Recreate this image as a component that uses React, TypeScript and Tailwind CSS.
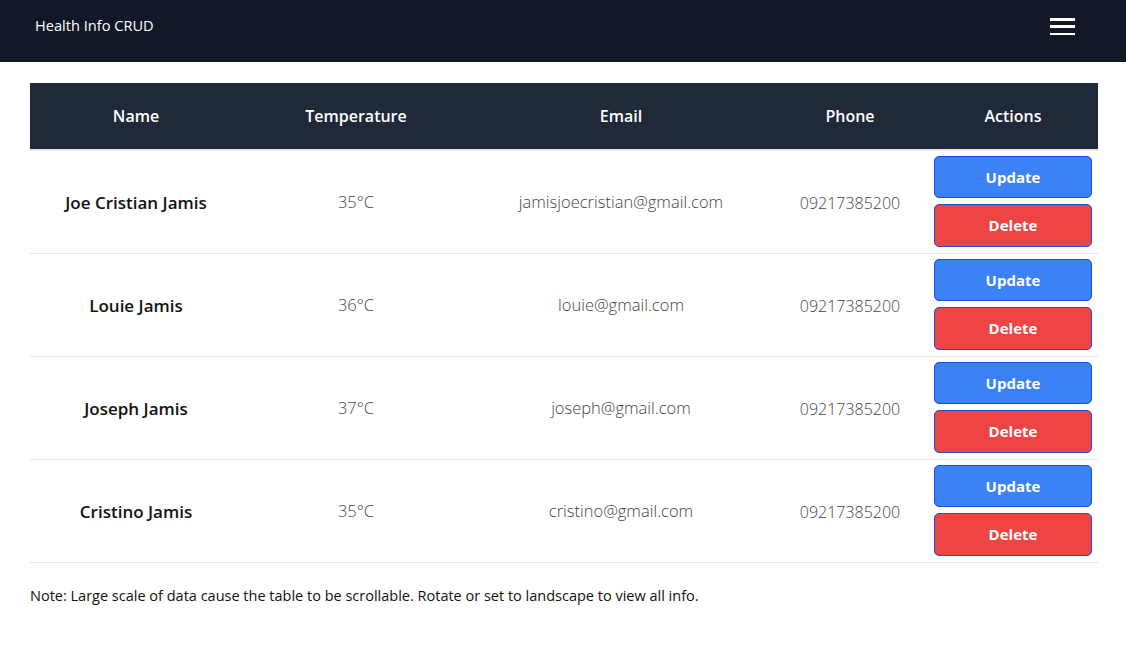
import React from "react";

const rows = [
  { name: "Joe Cristian Jamis", temp: "35°C", email: "jamisjoecristian@gmail.com", phone: "09217385200" },
  { name: "Louie Jamis", temp: "36°C", email: "louie@gmail.com", phone: "09217385200" },
  { name: "Joseph Jamis", temp: "37°C", email: "joseph@gmail.com", phone: "09217385200" },
  { name: "Cristino Jamis", temp: "35°C", email: "cristino@gmail.com", phone: "09217385200" },
];

export default function App() {
  return (
    <div className="min-h-screen bg-white font-['Open_Sans',sans-serif] text-[#111]">
      <nav className="flex h-[62px] items-center justify-between bg-[#111827] pb-[10px] pl-[35px] pr-[51px]">
        <span className="text-[14.6px] text-white">Health Info CRUD</span>
        <svg width="25" height="17" viewBox="0 0 25 17" className="block">
          <rect x="0" y="0" width="25" height="3" fill="white" />
          <rect x="0" y="7" width="25" height="3" fill="white" />
          <rect x="0" y="15" width="25" height="3" fill="white" />
        </svg>
      </nav>
      <div className="pl-[30px] pr-[28px] pt-[21px]">
        <table className="w-full table-fixed border-collapse">
          <colgroup>
            <col className="w-[212px]" />
            <col className="w-[228px]" />
            <col className="w-[302px]" />
            <col className="w-[156px]" />
            <col className="w-[170px]" />
          </colgroup>
          <thead>
            <tr className="h-[67px] bg-[#1f2937] text-white">
              <th className="text-[16px] font-semibold">Name</th>
              <th className="text-[16px] font-semibold">Temperature</th>
              <th className="text-[16px] font-semibold">Email</th>
              <th className="text-[16px] font-semibold">Phone</th>
              <th className="text-[16px] font-semibold">Actions</th>
            </tr>
          </thead>
          <tbody>
            {rows.map((r, i) => (
              <tr key={i} className={i === 0 ? "border-t-2 border-b border-[#e5e7eb]" : "border-b border-[#e5e7eb]"}>
                <td className="pt-[1px] text-center text-[17px] font-semibold text-[#111]">{r.name}</td>
                <td className="pt-[1px] text-center text-[16.5px] font-light text-[#444]">{r.temp}</td>
                <td className="pt-[1px] text-center text-[16.5px] font-light text-[#444]">{r.email}</td>
                <td className="pt-[1px] text-center text-[16px] font-light text-[#444]">{r.phone}</td>
                <td className="px-[6px] pt-[5px] pb-[6px]">
                  <div className="flex flex-col gap-[6px]">
                    <button className="h-[42px] w-full rounded-[5px] border border-[#1d4ed8] bg-[#3b82f6] text-[15px] font-bold text-white">
                      Update
                    </button>
                    <button className="h-[43px] w-full rounded-[5px] border border-[#1d4ed8] bg-[#ef4444] text-[15px] font-bold text-white">
                      Delete
                    </button>
                  </div>
                </td>
              </tr>
            ))}
          </tbody>
        </table>
        <p className="mt-[22px] text-[14.5px] text-[#111]">
          Note: Large scale of data cause the table to be scrollable. Rotate or set to landscape to view all info.
        </p>
      </div>
    </div>
  );
}
